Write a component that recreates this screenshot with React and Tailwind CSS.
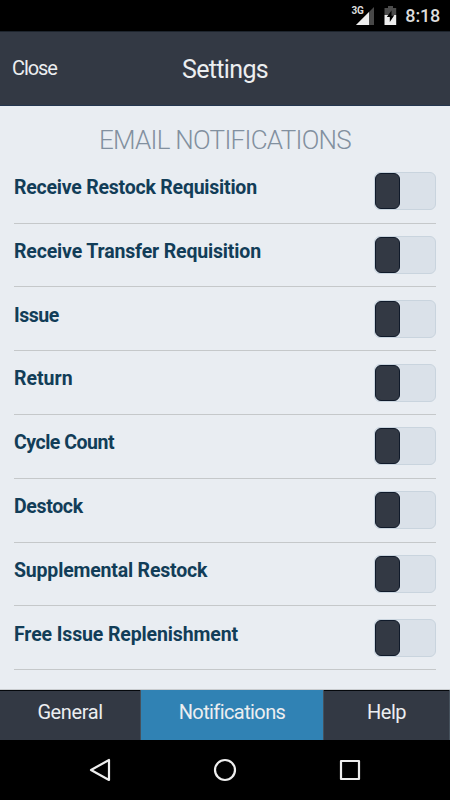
import { clsx } from "clsx";

const settings = [
  { label: "Receive Restock Requisition", tracking: "tracking-[-0.22px]" },
  { label: "Receive Transfer Requisition", tracking: "tracking-[-0.16px]" },
  { label: "Issue", tracking: "tracking-[-0.5px]" },
  { label: "Return", tracking: "tracking-normal" },
  { label: "Cycle Count", tracking: "tracking-[-0.48px]" },
  { label: "Destock", tracking: "tracking-[-0.35px]" },
  { label: "Supplemental Restock", tracking: "tracking-[-0.18px]" },
  { label: "Free Issue Replenishment", tracking: "tracking-[-0.13px]" },
];

const tabs = [
  { label: "General", width: "w-[141px]", tracking: "tracking-[-0.4px]" },
  { label: "Notifications", width: "w-[183px]", tracking: "tracking-[-0.6px]", active: true },
  { label: "Help", width: "w-[126px]", tracking: "tracking-[-0.5px]" },
];

function StatusBar() {
  return (
    <div className="flex h-[31px] shrink-0 items-center justify-end bg-black pr-[10px] text-[#dcdcdc]">
      {/* Signal */}
      <span className="-mr-[7px] mb-[9px] text-[10px] leading-none font-bold tracking-[-0.4px]">3G</span>
      <svg className="h-[18px] w-[18px]" viewBox="0 0 18 18">
        <path d="M0 18 18 0V18Z" fill="#484848" />
        <path d="M0 18 13 5V18Z" fill="#eee" />
      </svg>
      {/* Battery */}
      <svg className="ml-[10px] h-[19px] w-[13px]" viewBox="0 0 13 19">
        <path d="M4 0h5v2h3.2v7H.5V2H4Z" fill="#4c4c4c" />
        <path d="M.5 9h11.7v10H.5Z" fill="#eee" />
        <path d="M7.5 4.5 2.8 11h3v5l4.5-6.8h-2.8Z" fill="#000" />
      </svg>
      <span className="ml-[8px] text-[18px] leading-none font-medium tracking-[-0.2px]">8:18</span>
    </div>
  );
}

function Header() {
  return (
    <header className="grid h-[75px] shrink-0 grid-cols-3 items-center border-t border-b border-t-[#1d242d] border-b-[#24364f] bg-[#333944] text-[#eceef0]">
      <button className="pb-px pl-3 text-left text-[20px] tracking-[-1.1px]">Close</button>
      <h1 className="pt-[2px] text-center text-[25px] tracking-[-0.65px]">Settings</h1>
    </header>
  );
}

function Toggle() {
  return (
    <button
      role="switch"
      aria-checked="false"
      className="h-[38px] w-[62px] rounded-[6px] border border-[#c9d4de] bg-[#dae1e9]"
    >
      <span className="block h-[36px] w-[25px] rounded-[6px] border border-[#101a2a] bg-[#333944]" />
    </button>
  );
}

function SettingRow({ label, tracking }) {
  return (
    <li className="flex h-[63.8px] items-start justify-between border-b border-[#c5c8ca] pt-[12.4px]">
      <span className={clsx("pt-[1.8px] text-[19.5px] leading-[28px] font-bold text-[#123d58]", tracking)}>
        {label}
      </span>
      <Toggle />
    </li>
  );
}

function TabBar() {
  return (
    <nav className="flex h-[50px] shrink-0 bg-[#333944]">
      {tabs.map((tab) => (
        <button
          key={tab.label}
          className={clsx(
            "border-r border-[#46515c] pb-[6px] text-[20px] text-[#eceef0]",
            tab.width,
            tab.tracking,
            tab.active ? "bg-[#3082b4]" : "shadow-[inset_0_1px_0_#05080c]"
          )}
        >
          {tab.label}
        </button>
      ))}
    </nav>
  );
}

function NavigationBar() {
  return (
    <div className="flex h-[60px] shrink-0 items-center justify-center gap-[101px] bg-black">
      <svg className="h-6 w-6" viewBox="0 0 24 24" fill="none" stroke="#eee" strokeWidth="2.2" strokeLinejoin="round">
        <path d="M21 2v20L3 12Z" />
      </svg>
      <svg className="h-6 w-6" viewBox="0 0 24 24" fill="none" stroke="#eee" strokeWidth="2.2">
        <circle cx="12" cy="12" r="10" />
      </svg>
      <svg className="h-6 w-6" viewBox="0 0 24 24" fill="none" stroke="#eee" strokeWidth="2.2" strokeLinejoin="round">
        <path d="M3 3h18v18H3Z" />
      </svg>
    </div>
  );
}

function App() {
  return (
    <div className="flex h-[800px] w-[450px] flex-col overflow-hidden bg-[#e9edf2] font-['Roboto',sans-serif]">
      <StatusBar />
      <Header />
      <main className="min-h-0 flex-1 border-b border-[#c9cccf] px-[14px]">
        <h2 className="h-[53.8px] pt-[15px] text-center text-[26px] leading-[38px] font-light tracking-[-0.74px] whitespace-nowrap text-[#82909f]">
          EMAIL NOTIFICATIONS
        </h2>
        <ul>
          {settings.map((setting) => (
            <SettingRow key={setting.label} {...setting} />
          ))}
        </ul>
      </main>
      <TabBar />
      <NavigationBar />
    </div>
  );
}

export default App;
